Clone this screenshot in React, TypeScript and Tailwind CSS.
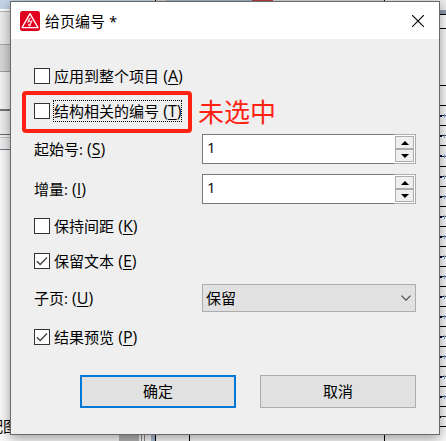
import { ReactNode } from "react";
import { clsx } from "clsx";

interface CheckOptionProps {
  id: string;
  label: string;
  hotkey: string;
  defaultChecked?: boolean;
  focused?: boolean;
}

const Caption = ({ label, hotkey }: { label: string; hotkey: string }) => (
  <>
    {label}
    <span className="text-[16px]">
      {" "}
      (<span className="underline underline-offset-2">{hotkey}</span>)
    </span>
  </>
);

const CheckOption = ({ id, label, hotkey, defaultChecked, focused }: CheckOptionProps) => (
  <div className="flex h-5 items-center gap-1">
    <span className="relative flex size-4">
      <input
        id={id}
        type="checkbox"
        defaultChecked={defaultChecked}
        className="peer size-4 appearance-none border border-[#333333] bg-white"
      />
      <svg
        viewBox="0 0 16 16"
        className="pointer-events-none absolute inset-0 hidden size-4 peer-checked:block"
        fill="none"
        stroke="#444444"
        strokeWidth="1.4"
      >
        <path d="M2.8 8.2 L6.2 11.4 L13 4.6" />
      </svg>
    </span>
    <label
      htmlFor={id}
      className={clsx("whitespace-nowrap leading-5", focused && "outline-1 outline-dotted outline-black")}
    >
      <Caption label={label} hotkey={hotkey} />
    </label>
  </div>
);

const FieldRow = ({ id, label, hotkey, children }: { id: string; label: string; hotkey: string; children: ReactNode }) => (
  <div className="flex items-center">
    <label htmlFor={id} className="w-[168px] shrink-0 leading-5">
      <Caption label={label} hotkey={hotkey} />
    </label>
    {children}
  </div>
);

const NumberField = ({ id }: { id: string }) => (
  <div className="flex h-[30px] min-w-0 flex-1">
    <input
      id={id}
      type="text"
      defaultValue="1"
      className="min-w-0 flex-1 border border-r-0 border-[#7a7a7a] bg-white pb-1 pl-1 outline-none"
    />
    <div className="flex w-[22px] flex-col border border-l-0 border-[#adadad] bg-white p-px">
      <button
        type="button"
        aria-label="增加"
        className="flex flex-1 items-center justify-center border border-[#adadad] bg-[#efefef]"
      >
        <svg viewBox="0 0 8 4" className="h-1 w-2">
          <path d="M0 4 L4 0 L8 4 Z" />
        </svg>
      </button>
      <button
        type="button"
        aria-label="减少"
        className="flex flex-1 items-center justify-center border border-[#adadad] bg-[#efefef]"
      >
        <svg viewBox="0 0 8 4" className="h-1 w-2">
          <path d="M0 0 L4 4 L8 0 Z" />
        </svg>
      </button>
    </div>
  </div>
);

// Rows of the schematic table that peek out beside the dialog
const tableRows = Array.from({ length: 16 }, (_, i) => i);

const Backdrop = () => (
  <div className="absolute inset-0 flex justify-between overflow-hidden bg-[#fafafa]" aria-hidden="true">
    {/* Left pane with toolbars */}
    <div className="flex w-[156px] flex-col justify-between border-r border-black">
      <div>
        <div className="h-[9px] bg-[#c5d6e8]" />
        <div className="h-[3px] border-b border-[#b4b4b4] bg-white" />
        <div className="h-[33px] border-b border-[#a8a8a8] bg-[#ececec]" />
        <div className="h-[27px] border-b border-[#a0a0a0] bg-[#d8d8d8]" />
        <div className="h-[39px] border-b-2 border-[#777777] bg-[#f4f4f4]" />
        <div className="h-6 border-b border-[#666666] bg-[#eeeeee]" />
        <div className="h-[3px] border-b border-[#c0c0c0] bg-[#f4f4f4]" />
        <div className="h-3 border-b border-[#777788] bg-[#eeeeee]" />
      </div>
      <div>
        <div className="-ml-3 text-[15px] leading-4">配图</div>
        <div className="flex h-[7px] justify-end">
          <div className="w-5 bg-[#b4b4b4]" />
          <div className="mx-0.5 w-1 border-x border-[#888888]" />
          <div className="w-1" />
          <div className="w-1 bg-[#a9bdd3]" />
        </div>
      </div>
    </div>

    {/* Top edge of the window behind, with a column rule at the bottom */}
    <div className="flex flex-1 flex-col justify-between">
      <div className="flex h-px">
        <div className="w-[10px] bg-[#d0d0d0]" />
        <div className="w-[86px] bg-[#9db4cc]" />
        <div className="w-[21px] bg-[#b84040]" />
        <div className="flex-1 bg-[#d8d8d8]" />
      </div>
      <div className="ml-[33px] h-2 w-px bg-black" />
    </div>

    <div className="flex w-[62px] flex-col border-l border-black">
      <div className="h-[10px] bg-[#eeeeee]" />
      <div className="h-[5px] border-b border-black bg-[#8c9aac]" />
      <div className="h-[14px] border-b border-black bg-white" />
      <div className="h-[57px] border-b border-black" />
      <div className="h-5 border-b border-black" />
      {tableRows.map((row) => (
        <div
          key={row}
          className={clsx(
            "flex items-center justify-end border-b border-black",
            row === 2 ? "h-[21px]" : "h-5"
          )}
        >
          <div className="h-0.5 w-1 bg-[#000030]" />
          <div className="h-px w-1 bg-[#222222]" />
          {row < 15 && <div className="-ml-0.5 h-1 w-px bg-[#7aa7ee]" />}
          <div className="h-px w-px bg-[#333333]" />
        </div>
      ))}
    </div>
  </div>
);

const App = () => {
  return (
    <div className="relative min-h-screen pb-[6px] pl-[10px] pr-[6px] pt-px font-['Open_Sans','Noto_Sans_CJK_SC',sans-serif] text-[15px] text-black">
      <Backdrop />

      <div
        role="dialog"
        aria-labelledby="dialog-title"
        className="relative border border-[#6a6a6a] bg-[#efefef] shadow-[0_3px_12px_rgba(0,0,0,0.4)]"
      >
        {/* Title bar */}
        <header className="flex h-[37px] items-center bg-white pl-[9px] pr-[15px]">
          <svg viewBox="0 0 20 20" className="size-5 shrink-0">
            <rect width="20" height="20" rx="2.5" fill="#e2001f" />
            <path d="M10 2.6 L18 16.6 H2 Z" fill="none" stroke="#ffffff" strokeWidth="1.3" strokeLinejoin="round" />
            <path
              d="M10.8 6.4 L8.2 11 L11.6 9.8 L9.2 14.6 M9.4 7.2 L7.6 11.6 M12.2 9.6 L9.6 15 M8 12.8 L9.2 15.2 L11 13.8"
              fill="none"
              stroke="#ffffff"
              strokeWidth="0.8"
            />
          </svg>
          <h1 id="dialog-title" className="ml-[5px] flex-1 leading-5">
            给页编号 *
          </h1>
          <button type="button" aria-label="关闭" className="flex size-3 items-center justify-center">
            <svg viewBox="0 0 12 12" className="size-3" fill="none" stroke="#000000" strokeWidth="1.1">
              <path d="M0 0 L12 12 M12 0 L0 12" />
            </svg>
          </button>
        </header>

        <form className="px-[23px] pb-[26px] pt-[27px]" onSubmit={(e) => e.preventDefault()}>
          <CheckOption id="whole-project" label="应用到整个项目" hotkey="A" />

          <div className="relative mt-[15px]">
            <CheckOption id="structure" label="结构相关的编号" hotkey="T" focused />
            {/* Callout drawn over the option */}
            <div className="pointer-events-none absolute -left-3 -top-[10px] flex items-center gap-[6px]">
              <div className="h-[42px] w-[170px] rounded-[4px] border-4 border-[#ff2213]" />
              <span className="whitespace-nowrap text-[26px] leading-8 text-[#ff2213]">未选中</span>
            </div>
          </div>

          <div className="mt-[13px] flex flex-col gap-[10px]">
            <FieldRow id="start" label="起始号:" hotkey="S">
              <NumberField id="start" />
            </FieldRow>
            <FieldRow id="step" label="增量:" hotkey="I">
              <NumberField id="step" />
            </FieldRow>
          </div>

          <div className="mt-3 flex flex-col gap-[15px]">
            <CheckOption id="keep-spacing" label="保持间距" hotkey="K" />
            <CheckOption id="keep-text" label="保留文本" hotkey="E" defaultChecked />
          </div>

          <div className="mt-[13px]">
            <FieldRow id="subpage" label="子页:" hotkey="U">
              <div className="relative flex min-w-0 flex-1">
                <select
                  id="subpage"
                  className="h-7 w-full appearance-none border border-[#adadad] bg-[#e1e1e1] pl-[3px] outline-none"
                >
                  <option>保留</option>
                </select>
                <svg
                  viewBox="0 0 10 6"
                  className="pointer-events-none absolute right-[5px] top-[11px] h-[6px] w-[10px]"
                  fill="none"
                  stroke="#444444"
                  strokeWidth="1.1"
                >
                  <path d="M0.5 0.6 L5 5.1 L9.5 0.6" />
                </svg>
              </div>
            </FieldRow>
          </div>

          <div className="mt-[15px]">
            <CheckOption id="preview" label="结果预览" hotkey="P" defaultChecked />
          </div>

          <div className="mt-7 grid grid-cols-2 gap-6 pl-[46px]">
            <button type="submit" className="h-[33px] border-2 border-[#0078d7] bg-[#e1e1e1]">
              确定
            </button>
            <button type="button" className="h-[33px] border border-[#adadad] bg-[#e1e1e1]">
              取消
            </button>
          </div>
        </form>
      </div>
    </div>
  );
};

export default App;
